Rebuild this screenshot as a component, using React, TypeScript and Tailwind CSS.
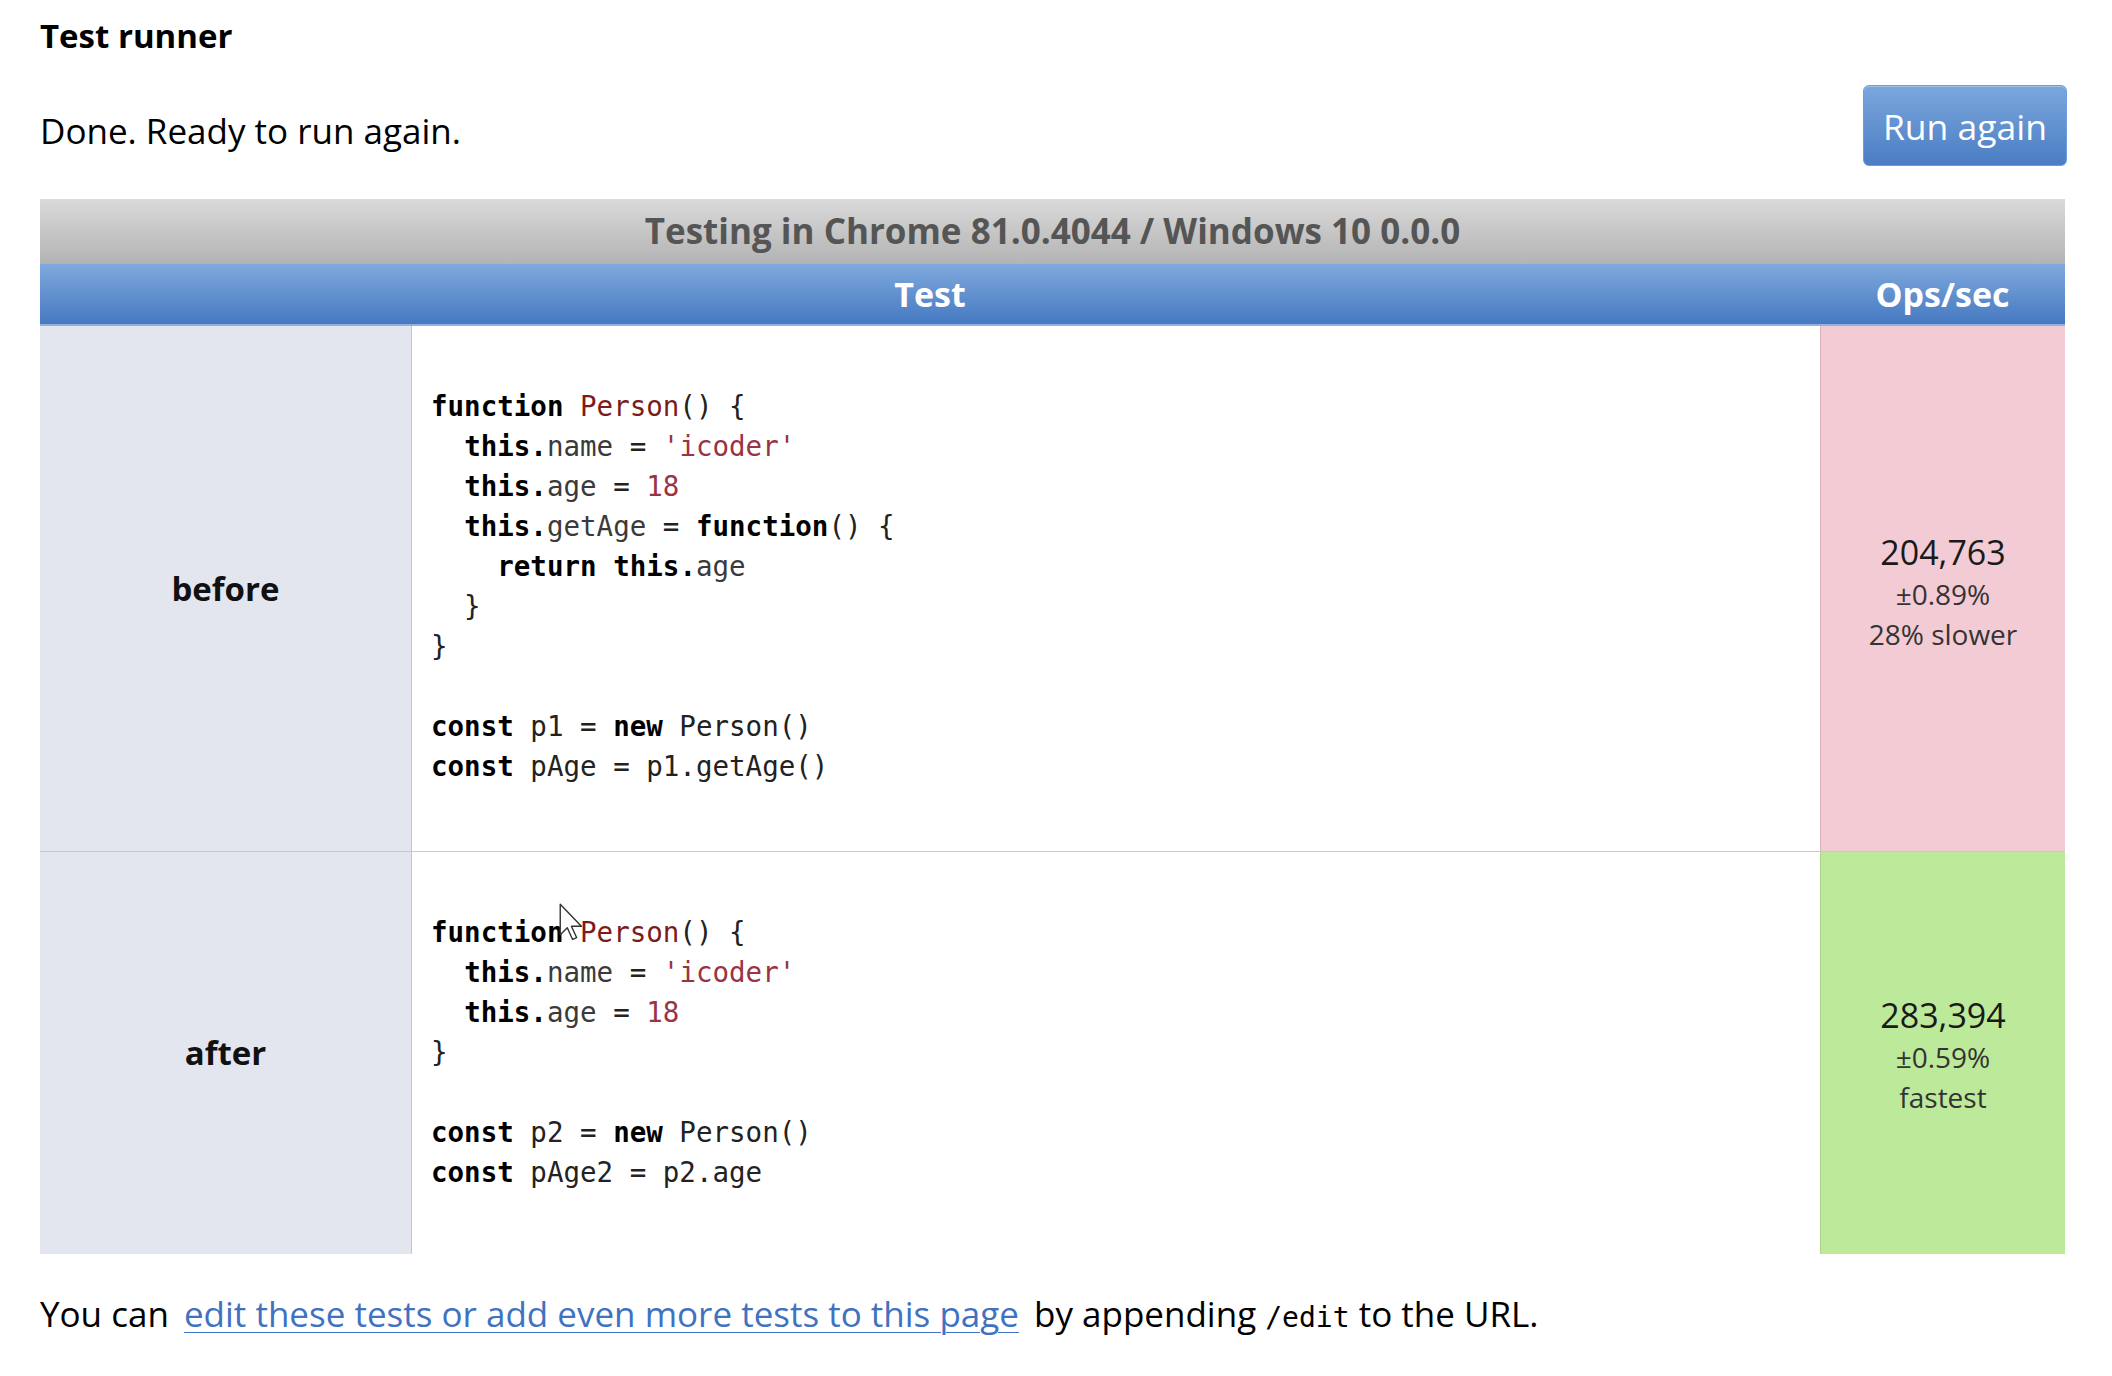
import type { ReactNode } from 'react'

const sans = "font-['Open_Sans','Noto_Sans',sans-serif]"
const mono = "font-['DejaVu_Sans_Mono','Liberation_Mono',monospace]"

type Tok = [string, string?]

const K = 'font-bold text-black'
const T = 'text-[#7d1b1b]'
const S = 'text-[#9a3344]'
const P = 'text-[#3a3a3a]'
const X = 'text-[#222]'

const beforeCode: Tok[][] = [
  [['function', K], [' '], ['Person', T], ['() {', X]],
  [['  '], ['this', K], ['.', K], ['name', P], [' = ', X], ["'icoder'", S]],
  [['  '], ['this', K], ['.', K], ['age', P], [' = ', X], ['18', S]],
  [['  '], ['this', K], ['.', K], ['getAge', P], [' = ', X], ['function', K], ['() {', X]],
  [['    '], ['return', K], [' '], ['this', K], ['.', K], ['age', P]],
  [['  }', X]],
  [['}', X]],
  [[' ']],
  [['const', K], [' p1 = ', X], ['new', K], [' Person()', X]],
  [['const', K], [' pAge = p1.getAge()', X]],
]

const afterCode: Tok[][] = [
  [['function', K], [' '], ['Person', T], ['() {', X]],
  [['  '], ['this', K], ['.', K], ['name', P], [' = ', X], ["'icoder'", S]],
  [['  '], ['this', K], ['.', K], ['age', P], [' = ', X], ['18', S]],
  [['}', X]],
  [[' ']],
  [['const', K], [' p2 = ', X], ['new', K], [' Person()', X]],
  [['const', K], [' pAge2 = p2.age', X]],
]

function Code({ lines }: { lines: Tok[][] }) {
  return (
    <pre className={`${mono} text-[27.5px] leading-[40px] text-[#222] whitespace-pre`}>
      {lines.map((line, i) => (
        <div key={i}>
          {line.map(([text, cls], j) => (
            <span key={j} className={cls}>
              {text}
            </span>
          ))}
        </div>
      ))}
    </pre>
  )
}

function Row({
  name,
  code,
  ops,
  error,
  note,
  tone,
  last,
  children,
}: {
  name: string
  code: Tok[][]
  ops: string
  error: string
  note: string
  tone: 'slow' | 'fast'
  last?: boolean
  children?: ReactNode
}) {
  return (
    <div className={`grid grid-cols-[372px_1fr_245px] ${last ? '' : 'border-b border-[#c9c9c9]'}`}>
      <div className="bg-[#e4e6ef] border-r border-[#c6c6c6] flex items-center justify-center">
        <span className={`${sans} font-bold text-[33px] text-[#111]`}>{name}</span>
      </div>
      <div className={`relative bg-white pl-[19px] pt-[60px] ${last ? 'pb-[62px]' : 'pb-[65px]'}`}>
        <Code lines={code} />
        {children}
      </div>
      <div
        className={`flex flex-col items-center justify-center ${sans} text-[#1a1a1a] ${
          tone === 'slow' ? 'bg-[#f3cbd4] border-l border-[#d9b3bb]' : 'bg-[#bde99b] border-l border-[#a9d48a]'
        }`}
      >
        <span className={`text-[34px] leading-[44px] ${last ? 'mt-[4px]' : 'mt-[6px]'}`}>{ops}</span>
        <span className="text-[28px] leading-[40px] text-[#333]">{error}</span>
        <span className="text-[28px] leading-[40px] text-[#333]">{note}</span>
      </div>
    </div>
  )
}

function Cursor() {
  return (
    <svg
      className="absolute left-[147px] top-[51px]"
      width="26"
      height="40"
      viewBox="0 0 22 34"
    >
      <path
        d="M1 1 L1 27 L7 21 L11.5 31 L15 29.5 L10.5 19.8 L19 19.8 Z"
        fill="#fff"
        stroke="#333"
        strokeWidth="1.2"
        strokeLinejoin="round"
      />
    </svg>
  )
}

export default function App() {
  return (
    <div className={`${sans} bg-white min-h-[1376px] pl-[40px] pr-[47px] pt-[16px] text-black`}>
      <h2 className="text-[33px] leading-[40px] font-bold">Test runner</h2>

      <div className="flex items-center justify-between mt-[29px] -mr-[2px]">
        <p className="text-[35px] leading-[48px] mt-[10px]">Done. Ready to run again.</p>
        <button className="h-[81px] w-[204px] rounded-[6px] border border-[#6d9ee0] bg-gradient-to-b from-[#7ba7dd] to-[#4a7dc3] text-white text-[35.5px] pt-[2px] shadow-[inset_0_1px_0_rgba(255,255,255,0.3)]">
          Run again
        </button>
      </div>

      <div className="mt-[33px]">
        <div className="h-[65px] bg-gradient-to-b from-[#dadada] to-[#b3b3b3] flex items-center justify-center">
          <span className="text-[35px] font-bold text-[#555]">
            Testing in Chrome 81.0.4044 / Windows 10 0.0.0
          </span>
        </div>
        <div className="grid grid-cols-[1fr_245px] h-[62px] bg-gradient-to-b from-[#80a9dd] to-[#4579c1] border-b-2 border-[#8fb2e0] text-white font-bold text-[34px]">
          <div className="flex items-center justify-center">Test</div>
          <div className="flex items-center justify-center">Ops/sec</div>
        </div>

        <Row
          name="before"
          code={beforeCode}
          ops="204,763"
          error="±0.89%"
          note="28% slower"
          tone="slow"
        />
        <Row
          name="after"
          code={afterCode}
          ops="283,394"
          error="±0.59%"
          note="fastest"
          tone="fast"
          last
        >
          <Cursor />
        </Row>
      </div>

      <p className="mt-[36px] text-[35px] leading-[48px]">
        You can{' '}
        <a href="#" className="text-[#3f72c0] underline underline-offset-[5px] decoration-1 mx-[6px]">
          edit these tests or add even more tests to this page
        </a>{' '}
        by appending <code className={`${mono} text-[28px]`}>/edit</code> to the URL.
      </p>
    </div>
  )
}
